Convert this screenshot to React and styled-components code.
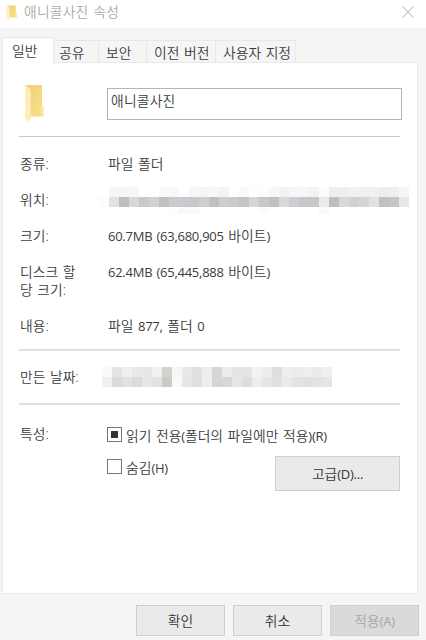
import React from 'react';
import styled, { createGlobalStyle } from 'styled-components';

const pathTop = 'fff f6f6f7 f6f6f7 f7f7f7 fff fff f9f9f8 f8f8f8 fff f7f7f7 f5f5f4 f6f7f6 f3f3f3 fff f9f9f9 fefefe fdfdfd f7f8f6 f1f3f3 f4f6f9 f6f7f6 f3f3f3 fcfcf9 eeeeee eeeeee f1f1f1 f0f0f0 f0f0f0 ededed efefed f6f6f6';
const pathMiddle = 'fdfcf7 e0e2e4 bfbfbf d9d7d8 c9c9c9 d2d2d0 bec1c0 cbcbc9 c5cbd0 cac7c6 cccfd2 c0c0c0 d0cdcf cacacd c5c5c3 d1d6d9 c8c9c4 c0c0c0 d9d7d7 ccced4 c6c8c5 c6c7c7 ecebea bdbec0 d9d9d9 d0d0d0 d5d5d5 dfe2e0 c2bfc0 c6c4c6 e8e8e8';
const pathBottom = 'fff fff fff fff fff fff fff fefefd f8f8f9 fafafa fff fff fff fff fff fff fbfbfb fff fff fff fff fff f9f9f9 fff fff fff fff fff fff fff fff';
const dateTop = 'f9f9f9 e2e5e4 efefed e8e8e8 e6e7e8 f0f2f1 d4d0ce f4f6f5 e8e8e8 e0e0e0 eeedeb d4d6d6 eeecea e3e3e3 e5e5e5 f3f3f3 efedeb dbdddf eeeeee ececec eeeeee ecebe9 eff0f2';
const dateBottom = 'f0efed dbdbdb e3e2e0 dbdbdb e5e7e9 e0e3e0 cccac9 f9f9f7 e4e6e9 e0dfdd eeeeee d4d6d6 d8d7d5 e6e6e6 dbdde0 f0eeec e4e6e8 dfe2e1 ebe9ea e3e3e3 e1e1e1 e3e3e3 e4e5e7';

const tabs = [
  { label: '공유', width: 45, pad: 5 },
  { label: '보안', width: 48, pad: 7 },
  { label: '이전 버전', width: 69, pad: 7 },
  { label: '사용자 지정', width: 80, pad: 7 }
];

const Mosaic = ({ rows, heights }) => (
  <StyledMosaic>
    {rows.map((row, i) => (
      <MosaicRow key={i} $height={heights[i]}>
        {row.split(' ').map((color, j) => (
          <MosaicCell key={j} $color={color} />
        ))}
      </MosaicRow>
    ))}
  </StyledMosaic>
);

const Folder = ({ width, height }) => (
  <svg width={width} height={height} viewBox="0 0 20 39" preserveAspectRatio="none">
    <defs>
      <linearGradient id="back" x1="0" y1="0" x2="1" y2="1">
        <stop offset="0" stopColor="#ecd07a" />
        <stop offset="1" stopColor="#fbe08a" />
      </linearGradient>
    </defs>
    <path d="M1 1H18V21L19.5 22.5V32.5H6Z" fill="url(#back)" />
    <path d="M17 21.5H19.5V32.5H17Z" fill="#fce8a4" />
    <path d="M1 1L7 6V33L6 38L1 35Z" fill="#fdefb9" />
    <path d="M6.8 6V33" stroke="#f1d587" strokeWidth=".6" />
  </svg>
);

const App = () => {
  return (
    <>
      <GlobalStyle />
      <Window>
        <TitleBar>
          <Folder width={11} height={15} />
          <Title>애니콜사진 속성</Title>
          <svg width="12" height="12" viewBox="0 0 12 12">
            <path d="M.7.7L11.3 11.3M11.3.7L.7 11.3" stroke="#c4c4c4" strokeWidth="1.1" />
          </svg>
        </TitleBar>
        <Tabs>
          <ActiveTab>일반</ActiveTab>
          {tabs.map(tab => (
            <Tab key={tab.label} $width={tab.width} $pad={tab.pad}>
              {tab.label}
            </Tab>
          ))}
        </Tabs>
        <Panel>
          <Header>
            <Folder width={20} height={39} />
            <NameInput>애니콜사진</NameInput>
          </Header>
          <Divider />
          <Details>
            <Row>
              <Label>종류:</Label>
              <span>파일 폴더</span>
            </Row>
            <Row>
              <Label>위치:</Label>
              <PathMosaic>
                <Mosaic rows={[pathTop, pathMiddle, pathBottom]} heights={[10, 10, 7]} />
              </PathMosaic>
            </Row>
            <Row>
              <Label>크기:</Label>
              <span>
                <Latin>60.7MB (63,680,905</Latin> 바이트<Latin>)</Latin>
              </span>
            </Row>
            <Row $height={54}>
              <Label>
                디스크 할<br />당 크기:
              </Label>
              <span>
                <Latin>62.4MB (65,445,888</Latin> 바이트<Latin>)</Latin>
              </span>
            </Row>
            <Row>
              <Label>내용:</Label>
              <span>
                파일 <Latin>877,</Latin> 폴더 <Latin>0</Latin>
              </span>
            </Row>
          </Details>
          <Divider $thick />
          <Row $height={52}>
            <Label>만든 날짜:</Label>
            <DateMosaic>
              <Mosaic rows={[dateTop, dateBottom]} heights={[10, 10]} />
            </DateMosaic>
          </Row>
          <Divider $thick />
          <Attributes>
            <Label>특성:</Label>
            <Options>
              <Option>
                <Checkbox>
                  <Mark />
                </Checkbox>
                <OptionText>
                  읽기 전용<Latin>(</Latin>폴더의 파일에만 적용<Latin>)(R)</Latin>
                </OptionText>
              </Option>
              <HiddenLine>
                <Option>
                  <Checkbox />
                  <OptionText>
                    숨김<Latin>(H)</Latin>
                  </OptionText>
                </Option>
                <Button $width={125} $height={35}>
                  고급<Latin>(D)...</Latin>
                </Button>
              </HiddenLine>
            </Options>
          </Attributes>
        </Panel>
        <Footer>
          <Button>확인</Button>
          <Button>취소</Button>
          <Button $disabled>
            적용<Latin>(A)</Latin>
          </Button>
        </Footer>
      </Window>
    </>
  );
};

export default App;

const GlobalStyle = createGlobalStyle`
  * {
    box-sizing: border-box;
  }
  body {
    margin: 0;
    background: #f5f5f5;
  }
  svg {
    display: block;
    flex: none;
  }
`;

const Window = styled.div`
  width: 426px;
  height: 640px;
  overflow: hidden;
  display: flex;
  flex-direction: column;
  background: #f5f5f5;
  color: #3c3c3c;
  font-family: 'Open Sans', 'Noto Sans CJK KR', sans-serif;
  font-size: 13.8px;
  font-weight: 350;
  line-height: 18px;
  word-spacing: 1px;
  white-space: nowrap;
`;

const TitleBar = styled.div`
  height: 28px;
  flex: none;
  display: flex;
  align-items: center;
  padding: 0 12px 4px 6px;
  background: white;
`;

const Title = styled.span`
  flex: 1;
  margin-left: 7px;
  color: #aaa;
  letter-spacing: 0.2px;
`;

const Latin = styled.span`
  font-size: 13px;
  font-weight: 400;
  letter-spacing: -0.25px;
`;

const Tabs = styled.div`
  height: 34px;
  flex: none;
  display: flex;
  align-items: flex-end;
  padding-left: 2px;
`;

const ActiveTab = styled.div`
  width: 52px;
  height: 26px;
  margin-bottom: -1px;
  z-index: 1;
  padding: 4px 0 0 9px;
  border: 1px solid #e8e8e8;
  border-bottom: 0;
  background: white;
`;

const Tab = styled.div`
  width: ${props => props.$width}px;
  height: 22px;
  padding: 3px 0 0 ${props => props.$pad}px;
  border: 1px solid #e8e8e8;
  border-left: 0;
  border-bottom: 0;
`;

const Panel = styled.div`
  width: 416px;
  height: 532px;
  flex: none;
  margin-left: 2px;
  padding: 0 0 0 16px;
  border: 1px solid #e8e8e8;
  background: white;
`;

const Header = styled.div`
  height: 73px;
  display: flex;
  align-items: flex-start;
  padding: 21px 0 0 5px;
  gap: 63px;
`;

const NameInput = styled.div`
  width: 295px;
  height: 32px;
  margin-top: 4px;
  padding: 3px;
  border: 1px solid #b5b5b5;
  background: white;
  letter-spacing: 0.2px;
`;

const Divider = styled.div`
  width: 381px;
  height: ${props => (props.$thick ? 2 : 1)}px;
  background: ${props => (props.$thick ? '#dfdfdf' : '#c9cbca')};
`;

const Details = styled.div`
  height: 212px;
  padding-top: 9px;
`;

const Row = styled.div`
  height: ${props => props.$height || 36}px;
  padding: ${props => (props.$height === 52 ? 17 : 9)}px 0 0 1px;
  display: flex;
  align-items: flex-start;
`;

const Label = styled.div`
  width: 88px;
  flex: none;
`;

const PathMosaic = styled.div`
  margin: -4px 0 0 -9px;
`;

const DateMosaic = styled.div`
  margin: -1px 0 0 -6px;
`;

const StyledMosaic = styled.div`
  display: flex;
  flex-direction: column;
`;

const MosaicRow = styled.div`
  display: flex;
  height: ${props => props.$height}px;
`;

const MosaicCell = styled.div`
  width: 10px;
  background: #${props => props.$color};
`;

const Attributes = styled.div`
  display: flex;
  padding: 20px 0 0 1px;
`;

const Options = styled.div`
  margin: 1px 0 0 -1px;
`;

const Option = styled.div`
  height: 18px;
  display: flex;
  gap: 4px;
`;

const OptionText = styled.span`
  padding-top: 1px;
`;

const Checkbox = styled.div`
  width: 15px;
  height: 15px;
  margin-top: 1px;
  flex: none;
  display: flex;
  align-items: center;
  justify-content: center;
  border: 1px solid #777;
  background: white;
`;

const Mark = styled.div`
  width: 7px;
  height: 7px;
  background: #333;
`;

const HiddenLine = styled.div`
  width: 293px;
  margin-top: 12px;
  display: flex;
  justify-content: space-between;
  ${Option} {
    margin-top: 2px;
  }
`;

const Button = styled.div`
  width: ${props => props.$width || 89}px;
  height: ${props => props.$height || 31}px;
  display: flex;
  align-items: center;
  justify-content: center;
  border: 1px solid #cfcfcf;
  background: ${props => (props.$disabled ? '#dadada' : '#eaeaea')};
  color: ${props => (props.$disabled ? '#a5a5a5' : '#333')};
`;

const Footer = styled.div`
  display: flex;
  gap: 8px;
  padding: 11px 0 0 136px;
`;
